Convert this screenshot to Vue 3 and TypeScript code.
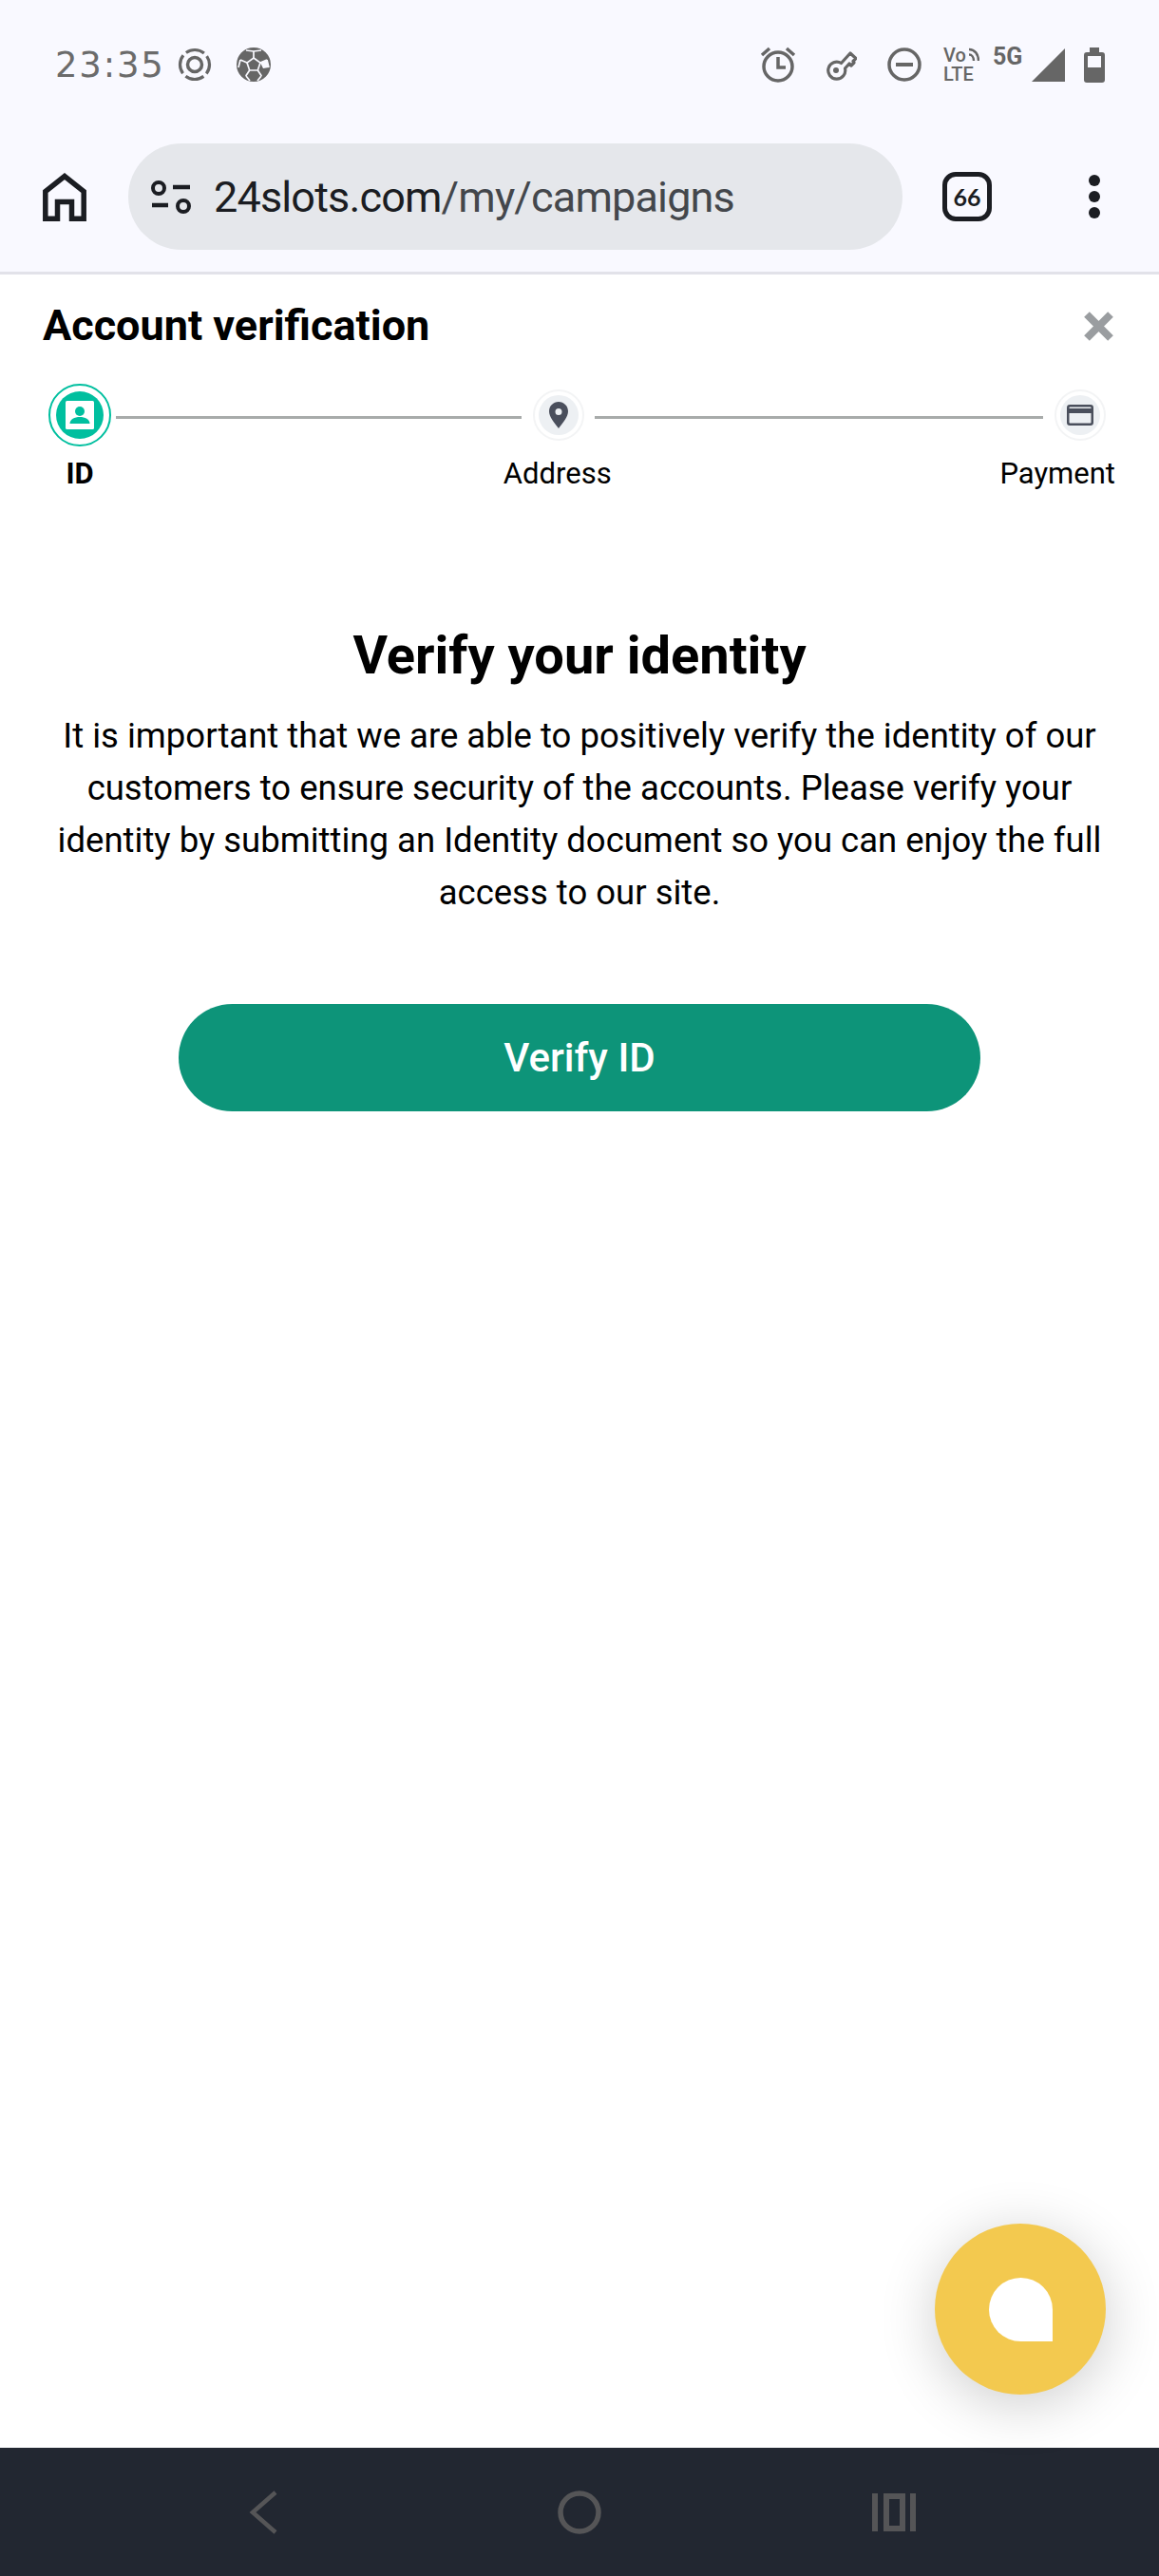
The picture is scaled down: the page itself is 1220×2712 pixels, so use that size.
<script setup lang="ts">
const paragraph = [
  'It is important that we are able to positively verify the identity of our',
  'customers to ensure security of the accounts. Please verify your',
  'identity by submitting an Identity document so you can enjoy the full',
  'access to our site.',
]
</script>

<template>
  <div class="page">
    <header class="chrome">
      <div class="status">
        <div class="status-left">
          <span class="time">23:35</span>
          <svg class="ring" width="36" height="36" viewBox="0 0 36 36" fill="none" stroke="#666">
            <circle cx="18" cy="18" r="15.5" stroke-width="3.2" stroke-dasharray="20.3 4.05" stroke-dashoffset="10.15" />
            <circle cx="18" cy="18" r="7.5" stroke-width="3.5" />
          </svg>
          <svg class="ball" width="36" height="36" viewBox="0 0 36 36">
            <circle cx="18" cy="18" r="18" fill="#666" />
            <g fill="none" stroke="#f9f9ff" stroke-width="1.7">
              <path d="M18 11l7 5-2.700 8h-8.600L11 16z" />
              <path d="M18 11V4M25 16l7-3M22.300 24l4 6M13.700 24l-4 6M11 16l-7-3" />
              <path d="M10 3l8 1 8-1M32 13l2 8M26 30l-4 5M10 30l4 5M4 13l-2 8" />
            </g>
            <path d="M32 13l2 8-6 1-3-6z" fill="#f9f9ff" />
          </svg>
        </div>
        <div class="status-right">
          <svg class="alarm" width="38" height="38" viewBox="0 0 38 38" fill="none" stroke="#666" stroke-width="3.5">
            <circle cx="19" cy="21" r="15" />
            <path d="M19 11v11h8" />
            <path d="M2 9l8-7M36 9l-8-7" />
          </svg>
          <svg class="key" width="34" height="34" viewBox="0 0 34 34" fill="none" stroke="#666">
            <path d="M17.500 15.500L27 5l6 5.500-3 3 1 1.500-3 3-2-2-4.500 5A9 9 0 1 1 17.500 15.500z" stroke-width="3.200" stroke-linejoin="round" />
            <circle cx="12" cy="23" r="3" fill="#666" stroke="none" />
          </svg>
          <svg class="dnd" width="36" height="36" viewBox="0 0 36 36" fill="none" stroke="#666">
            <circle cx="18" cy="18" r="16" stroke-width="3.5" />
            <path d="M9 18h18" stroke-width="4" />
          </svg>
          <div class="volte">
            <div class="vo">
              <span>Vo</span>
              <svg class="vo-arcs" width="12" height="16" viewBox="0 0 12 16" fill="none" stroke="#666" stroke-width="2.500">
                <path d="M1 2c6 0 10 5 10 12M1 7.500c3 0 5 3 5 6.500" />
              </svg>
            </div>
            <span class="lte">LTE</span>
          </div>
          <span class="five-g">5G</span>
          <svg class="signal" width="35" height="35" viewBox="0 0 35 35">
            <path d="M0 35L35 0v35z" fill="#666" />
          </svg>
          <svg class="battery" width="22" height="37" viewBox="0 0 22 37">
            <path d="M6 0h10v5h3a3 3 0 0 1 3 3v26a3 3 0 0 1-3 3H3a3 3 0 0 1-3-3V8a3 3 0 0 1 3-3h3z" fill="#666" />
            <rect x="4" y="9" width="14" height="12" fill="#f9f9ff" />
          </svg>
        </div>
      </div>
      <div class="toolbar">
        <svg class="home" width="46" height="51" viewBox="0 0 46 51" fill="none" stroke="#1b1d22" stroke-width="5.500">
          <path d="M15.500 48.200V30.500h15v17.700h12.700V19.500L23 3.500 2.800 19.500v28.700z" />
        </svg>
        <div class="address">
          <svg class="tune" width="42" height="35" viewBox="0 0 42 35" fill="none" stroke="#1b1d22">
            <circle cx="8" cy="8" r="6" stroke-width="4" />
            <circle cx="34" cy="27" r="6" stroke-width="4" />
            <path d="M23 7h18M1 26h17" stroke-width="4.500" />
          </svg>
          <span class="url">24slots.com<span class="url-path">/my/campaigns</span></span>
        </div>
        <div class="tabs"><span>66</span></div>
        <div class="menu">
          <i></i>
          <i></i>
          <i></i>
        </div>
      </div>
    </header>

    <main class="dialog">
      <div class="dialog-head">
        <h1>Account verification</h1>
        <svg class="close" width="31" height="31" viewBox="0 0 31 31" fill="none" stroke="#9a9da0" stroke-width="8">
          <path d="M3 3l25 25M28 3L3 28" />
        </svg>
      </div>

      <div class="stepper">
        <div class="step-active">
          <div class="step-active-fill">
            <svg width="30" height="30" viewBox="0 0 30 30">
              <rect width="30" height="30" rx="1.500" fill="#fff" />
              <circle cx="15" cy="11" r="5" fill="#00bf9f" />
              <path d="M4.500 24c0-4.500 5-7 10.500-7s10.500 2.500 10.500 7z" fill="#00bf9f" />
            </svg>
          </div>
        </div>
        <div class="step-line first"></div>
        <div class="step">
          <div class="step-fill">
            <svg width="20" height="28" viewBox="0 0 20 28">
              <path fill-rule="evenodd" d="M10 0c5.500 0 10 4.400 10 10 0 6-5.500 12-10 18C5.500 22 0 16 0 10 0 4.400 4.500 0 10 0zm0 7a3.500 3.500 0 1 0 0 7 3.500 3.500 0 0 0 0-7z" fill="#4a4f5c" />
            </svg>
          </div>
        </div>
        <div class="step-line second"></div>
        <div class="step">
          <div class="step-fill">
            <svg width="28" height="22" viewBox="0 0 28 22" fill="none">
              <rect x="1.250" y="1.250" width="25.500" height="19.500" rx="2" stroke="#4a4f5c" stroke-width="2.500" />
              <rect x="1" y="4" width="26" height="5" fill="#4a4f5c" />
            </svg>
          </div>
        </div>
      </div>
      <div class="step-labels">
        <span class="label-id">ID</span>
        <span class="label-address">Address</span>
        <span>Payment</span>
      </div>

      <section class="verify">
        <h2>Verify your identity</h2>
        <p v-for="line in paragraph" :key="line">{{ line }}</p>
        <button class="verify-btn" type="button">Verify ID</button>
      </section>
    </main>

    <div class="chat">
      <div class="chat-bubble"></div>
    </div>

    <footer class="nav">
      <svg width="30" height="46" viewBox="0 0 30 46" fill="none" stroke="#555557" stroke-width="4.500">
        <path d="M28 2L4 23l24 21" />
      </svg>
      <svg class="nav-home" width="46" height="46" viewBox="0 0 46 46" fill="none" stroke="#555557" stroke-width="5.500">
        <circle cx="23" cy="23" r="20" />
      </svg>
      <svg class="nav-recents" width="46" height="40" viewBox="0 0 46 40" fill="#555557">
        <rect width="6" height="40" />
        <rect x="40" width="6" height="40" />
        <path fill-rule="evenodd" d="M12 0h23v40H12zm6 6v28h11V6z" />
      </svg>
    </footer>
  </div>
</template>

<style>
html,
body {
  margin: 0;
  background: #fff;
}
</style>

<style scoped>
.page {
  position: relative;
  display: flex;
  flex-direction: column;
  width: 1220px;
  height: 2712px;
  overflow: hidden;
  background: #fff;
  font-family: Roboto, sans-serif;
  color: #000;
}

.chrome {
  height: 289px;
  box-sizing: border-box;
  background: #f9f9ff;
  border-bottom: 3px solid #e2e2e9;
}

.status {
  display: flex;
  align-items: center;
  justify-content: space-between;
  height: 136px;
  padding: 0 57px 0 58px;
}

.status-left,
.status-right {
  display: flex;
  align-items: center;
}

.time {
  width: 129px;
  font-family: 'DejaVu Sans', sans-serif;
  font-size: 37px;
  letter-spacing: 1.8px;
  color: #6b6b6b;
}

.ball {
  margin-left: 26px;
}

.status-right {
  height: 38px;
}

.key {
  margin-left: 30px;
}

.dnd {
  margin-left: 32px;
}

.volte {
  display: flex;
  flex-direction: column;
  width: 38px;
  margin-left: 23px;
  font-size: 20px;
  font-weight: 500;
  line-height: 20px;
  color: #666;
}

.vo {
  display: flex;
  align-items: center;
  gap: 2px;
  height: 20px;
}

.vo-arcs {
  flex-shrink: 0;
}

.five-g {
  align-self: flex-start;
  width: 41px;
  margin-left: 14px;
  font-size: 25px;
  font-weight: 700;
  line-height: 22px;
  color: #666;
}

.battery {
  margin-left: 20px;
}

.toolbar {
  display: flex;
  align-items: center;
  height: 112px;
  padding: 15px 0 0 45px;
}

.address {
  display: flex;
  align-items: center;
  gap: 24px;
  box-sizing: border-box;
  width: 815px;
  height: 112px;
  margin-left: 44px;
  padding-left: 24px;
  border-radius: 56px;
  background: #e5e7eb;
}

.url {
  font-size: 45px;
  letter-spacing: -0.85px;
  color: #1b1d22;
}

.url-path {
  color: #44474c;
}

.tabs {
  display: flex;
  align-items: center;
  justify-content: center;
  box-sizing: border-box;
  width: 52px;
  height: 52px;
  margin-left: 42px;
  border: 5.5px solid #1b1d22;
  border-radius: 14px;
  font-family: Lato, sans-serif;
  font-size: 25px;
  font-weight: 700;
  color: #1b1d22;
}

.menu {
  display: flex;
  flex-direction: column;
  gap: 5px;
  margin-left: 102px;
}

.menu i {
  display: block;
  width: 12px;
  height: 12px;
  border-radius: 50%;
  background: #1b1d22;
}

.dialog {
  flex: 1;
}

.dialog-head {
  display: flex;
  align-items: center;
  justify-content: space-between;
  height: 52px;
  padding: 28px 48px 0 45px;
}

h1 {
  margin: 0;
  font-size: 45px;
  font-weight: 700;
  line-height: 52px;
}

.stepper {
  display: flex;
  align-items: center;
  height: 66px;
  margin-top: 35px;
  padding-left: 51px;
}

.step-active {
  display: flex;
  align-items: center;
  justify-content: center;
  box-sizing: border-box;
  width: 66px;
  height: 66px;
  border: 2px solid #00bf9f;
  border-radius: 50%;
}

.step-active-fill {
  display: flex;
  align-items: center;
  justify-content: center;
  width: 50px;
  height: 50px;
  border-radius: 50%;
  background: #00bf9f;
}

.step-line {
  height: 3px;
  margin-top: 4px;
  background: #a8abaa;
}

.step-line.first {
  width: 427px;
  margin-left: 5px;
  margin-right: 12px;
}

.step-line.second {
  width: 472px;
  margin-left: 11px;
  margin-right: 12px;
}

.step {
  display: flex;
  align-items: center;
  justify-content: center;
  box-sizing: border-box;
  width: 54px;
  height: 54px;
  border: 2px solid #f3f4f5;
  border-radius: 50%;
}

.step-fill {
  display: flex;
  align-items: center;
  justify-content: center;
  width: 42px;
  height: 42px;
  border-radius: 50%;
  background: #edf0f3;
}

.step-labels {
  display: flex;
  justify-content: space-between;
  margin-top: 11px;
  padding: 0 46px 0 51px;
  font-size: 31px;
  line-height: 36px;
}

.label-id {
  width: 66px;
  font-weight: 700;
  text-align: center;
}

.label-address {
  margin-left: 4px;
}

.verify {
  display: flex;
  flex-direction: column;
  align-items: center;
  margin-top: 141px;
}

h2 {
  margin: 0 0 25px;
  font-size: 56px;
  font-weight: 700;
  line-height: 64px;
}

.verify p {
  margin: 0;
  font-size: 36.5px;
  line-height: 55px;
  white-space: nowrap;
}

.verify-btn {
  width: 844px;
  height: 113px;
  margin-top: 90px;
  border: 0;
  border-radius: 57px;
  background: #0d9479;
  font-family: inherit;
  font-size: 42px;
  font-weight: 500;
  color: #fff;
}

.chat {
  position: absolute;
  left: 984px;
  top: 2341px;
  display: flex;
  align-items: center;
  justify-content: center;
  width: 180px;
  height: 180px;
  border-radius: 50%;
  background: #f3c94f;
  box-shadow: 0 10px 60px rgba(0, 0, 0, 0.2);
}

.chat-bubble {
  width: 67px;
  height: 67px;
  border-radius: 50% 50% 0 50%;
  background: #fff;
}

.nav {
  display: flex;
  align-items: center;
  box-sizing: border-box;
  height: 135px;
  padding-left: 262px;
  background: #222731;
}

.nav-home {
  margin-left: 295px;
}

.nav-recents {
  margin-left: 285px;
}
</style>
